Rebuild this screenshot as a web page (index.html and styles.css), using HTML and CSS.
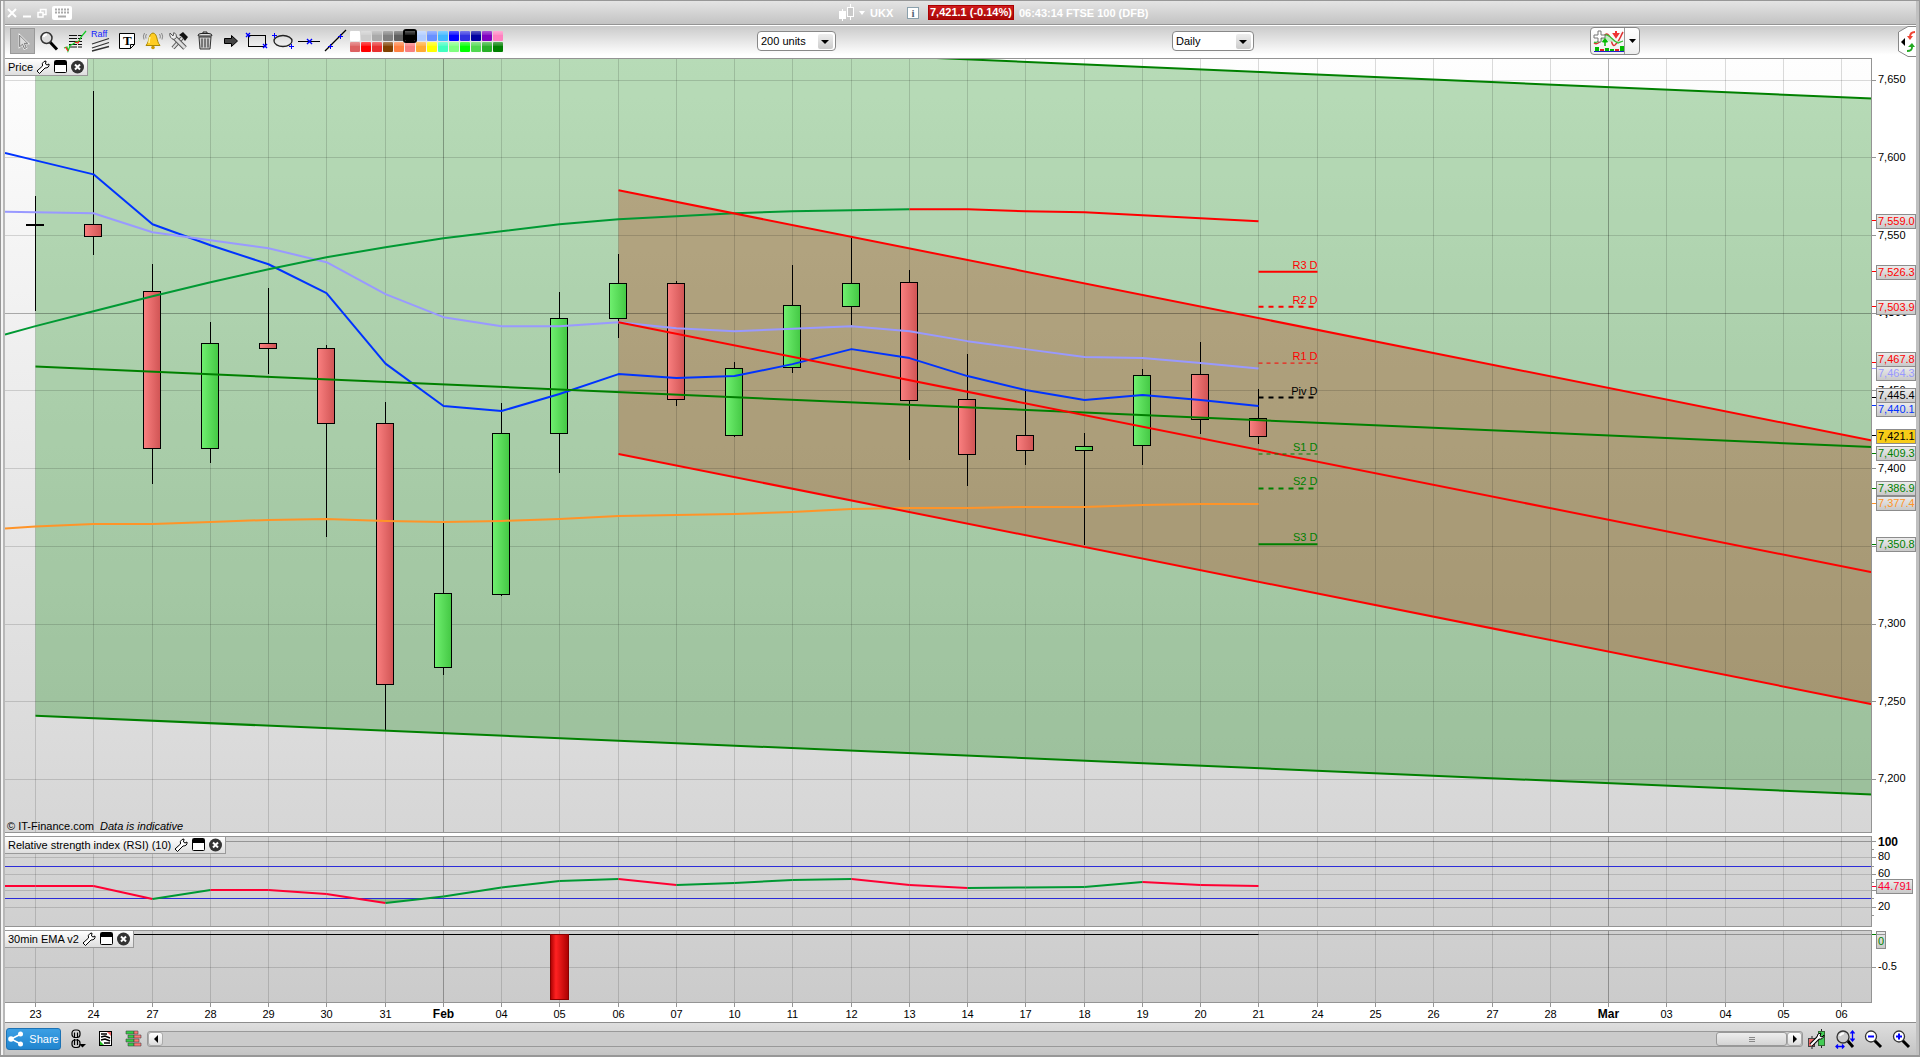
FILE: index.html
```
<!DOCTYPE html>
<html lang="en">
<head>
  <meta charset="UTF-8" />
  <title>UKX - FTSE 100 (DFB)</title>
  <link rel="stylesheet" href="styles.css">
</head>
<body>
  <div class="window">
    <header class="titlebar">
      <div class="win-buttons">
        <button class="win-btn" aria-label="Close"><svg width="10" height="10" viewBox="0 0 10 10"><path d="M1 1L9 9M9 1L1 9" stroke="#fff" stroke-width="2"/></svg></button>
        <button class="win-btn" aria-label="Minimise"><svg width="10" height="10" viewBox="0 0 10 10"><path d="M1 8.5H9" stroke="#fff" stroke-width="2"/></svg></button>
        <button class="win-btn" aria-label="Restore"><svg width="10" height="10" viewBox="0 0 10 10"><path d="M3.5 4V1.5H9V6.5H6.500M1 4.500H6V9H1Z" fill="none" stroke="#fff" stroke-width="1.500"/></svg></button>
        <button class="win-btn" aria-label="Keyboard"><svg width="20" height="14" viewBox="0 0 20 14"><rect width="20" height="14" rx="2" fill="#fff"/><path d="M3 3.500H17M3 6.500H17" stroke="#aaa" stroke-width="2" stroke-dasharray="2 1"/><path d="M6 10.500H14" stroke="#aaa" stroke-width="2"/></svg></button>
      </div>
      <div class="instrument">
        <svg width="16" height="18" viewBox="0 0 16 18"><path d="M3.500 5V17M11.500 0V16" stroke="#fff"/><rect y="7" width="7" height="8" fill="#fff"/><rect x="8.500" y="3.500" width="6" height="9" fill="#c9c9c9" stroke="#fff"/></svg>
        <span class="caret"></span>
        <span class="symbol">UKX</span>
        <button class="info" aria-label="Information">i</button>
        <strong class="quote">7,421.1 (-0.14%)</strong>
        <span>06:43:14 FTSE 100 (DFB)</span>
      </div>
    </header>

    <div class="toolbar">
      <div class="tools">
        <button class="tool active" aria-label="Pointer"><svg width="24" height="24" viewBox="0 0 24 24"><path d="M9 6V18L12 15.500L14 20L16 19L14 14.500H17.500Z" fill="#ccc" stroke="#fff" stroke-width="2"/><path d="M9 6V18L12 15.500L14 20L16 19L14 14.500H17.500Z" fill="#ddd" stroke="#555" stroke-width=".8"/></svg></button>
        <button class="tool" aria-label="Zoom"><svg width="24" height="24" viewBox="0 0 24 24"><path d="M13 13L20 20.500" stroke="#000" stroke-width="3"/><circle cx="9.500" cy="9" r="5.500" fill="#ddd" stroke="#333" stroke-width="1.500"/><path d="M6.500 8A3.500 3.500 0 0 1 10 5.500" stroke="#fff" stroke-width="2" fill="none"/></svg></button>
        <button class="tool" aria-label="Order"><svg width="24" height="24" viewBox="0 0 24 24"><path d="M6 6.500H19M6 9.500H19M6 12.500H19M6 15.500H19M6 18H19" stroke="#111" stroke-dasharray="8 1 4 1"/><path d="M6 17L10 15L13 13L16 12L18 8L23 2" stroke="#1c2" fill="none" stroke-width="1.200"/><path d="M1 19L4 18L5 22L7 17" stroke="#1c2" fill="none" stroke-width="1.200"/><path d="M2.500 18L5 22M12 13L15 14L16 12" stroke="#f22" fill="none" stroke-width="1.300"/></svg></button>
        <button class="tool" aria-label="Raff channel"><svg width="24" height="24" viewBox="0 0 24 24"><text x="2" y="8" class="raff">Raff</text><path d="M3 15L20 9.500M3 19L20 13.500M3 22L20 17.500" stroke="#333" stroke-width="1.300"/></svg></button>
        <button class="tool" aria-label="Text"><svg width="24" height="24" viewBox="0 0 24 24"><path d="M4.500 4.500H19.500V15.500L15.500 19.500H4.500ZM19.500 15.500H15.500V19.500" fill="#fff" stroke="#000"/><text x="8" y="16" class="tee">T</text></svg></button>
        <button class="tool" aria-label="Alert"><svg width="24" height="24" viewBox="0 0 24 24"><path d="M12 4C7 5 9 12 5 16.500H19C15 12 17 5 12 4Z" fill="#fc2" stroke="#a80"/><circle cx="12" cy="18.500" r="1.800" fill="#c90"/><path d="M9 8Q8 11 8 14" stroke="#fff5a0" stroke-width="1.500" fill="none"/><path d="M5.500 5Q4 7 5 9.500M3.500 4Q1.500 7 3 10.500M18.500 5Q20 7 19 9.500M20.500 4Q22.500 7 21 10.500" fill="none" stroke="#888"/></svg></button>
        <button class="tool" aria-label="Settings"><svg width="24" height="24" viewBox="0 0 24 24"><path d="M6 19L15 9" stroke="#555" stroke-width="4"/><path d="M6 19L15 9" stroke="#ddd" stroke-width="2"/><path d="M7 8L18 19" stroke="#555" stroke-width="5"/><path d="M7 8L18 19" stroke="#ddd" stroke-width="3"/><path d="M3 4L6 7L7 3.500A5 5 0 0 1 9.500 8.500L7 10.500A5 5 0 0 1 3 4Z" fill="#eee" stroke="#555"/><path d="M12 6L16 3L21 8L18 12L15 8Z" fill="#111"/></svg></button>
        <button class="tool" aria-label="Delete"><svg width="24" height="24" viewBox="0 0 24 24"><path d="M6 8H18L17 20H7Z" fill="#ccc" stroke="#333"/><path d="M5 7Q5 4.500 8 4.500H16Q19 4.500 19 7Z" fill="#ddd" stroke="#222"/><path d="M10 4.500V3H14V4.500M9 9.500V18.500M12 9.500V18.500M15 9.500V18.500" fill="none" stroke="#222"/></svg></button>
        <button class="tool" aria-label="Arrow"><svg width="24" height="24" viewBox="0 0 24 24"><path d="M5.500 9.500H12.500V6.500L18.500 12L12.500 17.500V14.500H5.500Z" fill="#444" stroke="#000"/></svg></button>
        <button class="tool" aria-label="Rectangle"><svg width="24" height="24" viewBox="0 0 24 24"><rect x="3.500" y="6.500" width="17" height="11" fill="none" stroke="#000"/><path d="M1 4L5 8M5 4L1 8M18 15L22 19M22 15L18 19" stroke="#00f" stroke-width="1.400"/></svg></button>
        <button class="tool" aria-label="Ellipse"><svg width="24" height="24" viewBox="0 0 24 24"><ellipse cx="12" cy="12" rx="9" ry="5.500" fill="none" stroke="#222" stroke-width="1.300"/><path d="M3.500 4V9M1 6.500H6M20.500 15V20M18 17.500H23" stroke="#00f"/></svg></button>
        <button class="tool" aria-label="Horizontal line"><svg width="24" height="24" viewBox="0 0 24 24"><path d="M1 12.500H23" stroke="#000"/><path d="M10 10L15 15M15 10L10 15" stroke="#00f" stroke-width="1.400"/></svg></button>
        <button class="tool" aria-label="Line"><svg width="24" height="24" viewBox="0 0 24 24"><path d="M2 22L23 1" stroke="#000" stroke-width="1.300"/><path d="M7.500 15V20M5 17.500H10M17.500 5V10M15 7.500H20" stroke="#00f"/></svg></button>
        <div class="palette">
          <button class="sw c1" aria-label="White"></button><button class="sw c2" aria-label="Light grey"></button><button class="sw c3" aria-label="Silver"></button><button class="sw c4" aria-label="Grey"></button><button class="sw c5" aria-label="Dark grey"></button><button class="sw c6 picked" aria-label="Black"></button><button class="sw c7" aria-label="Pale blue"></button><button class="sw c8" aria-label="Cornflower"></button><button class="sw c9" aria-label="Sky blue"></button><button class="sw c10" aria-label="Blue"></button><button class="sw c11" aria-label="Royal blue"></button><button class="sw c12" aria-label="Navy"></button><button class="sw c13" aria-label="Purple"></button><button class="sw c14" aria-label="Pink"></button>
          <button class="sw c15" aria-label="Rose"></button><button class="sw c16" aria-label="Red"></button><button class="sw c17" aria-label="Crimson"></button><button class="sw c18" aria-label="Brown"></button><button class="sw c19" aria-label="Orange"></button><button class="sw c20" aria-label="Salmon"></button><button class="sw c21" aria-label="Amber"></button><button class="sw c22" aria-label="Yellow"></button><button class="sw c23" aria-label="Aqua"></button><button class="sw c24" aria-label="Pale green"></button><button class="sw c25" aria-label="Lime"></button><button class="sw c26" aria-label="Mid green"></button><button class="sw c27" aria-label="Forest green"></button><button class="sw c28" aria-label="Green"></button>
        </div>
      </div>
      <div class="cell">
        <div class="drop"><select aria-label="Number of units"><option>200 units</option></select></div>
      </div>
      <div class="cell">
        <div class="drop wide"><select aria-label="Timeframe"><option>Daily</option></select></div>
      </div>
      <div class="cell last">
        <div class="indicators">
          <button class="ind" aria-label="Add indicator"><svg width="32" height="24" viewBox="0 0 32 24"><path d="M2 14C8 18 11 4 15 5C20 6 19 19 23 16C28 12 28 8 31 3" fill="none" stroke="#d33" stroke-width="1.500"/><path d="M2 13C7 16 10 5 15 6C20 8 21 12 26 14L31 12" fill="#c4ecc4" stroke="#3b3" stroke-width="1.300"/><path d="M6 2H9V6H13V9H9V13H6V9H2V6H6Z" fill="#fff" stroke="#777"/><path d="M13 17V13H10.500L13 9.500L15.500 13H13Z" fill="#0b0" stroke="#0b0"/><path d="M24 2V6M22 5L24 8L26 5Z" fill="#e33" stroke="#e33" stroke-width="2"/><path d="M3 18H7V22H3ZM13 19H17V22H13ZM28 17H32V22H28Z" fill="#0b0"/><path d="M8 20H12V22H8ZM23 20H27V22H23Z" fill="#d22"/><path d="M18 20H22V22H18Z" fill="#0b0"/><path d="M2 22.500H32" stroke="#22c"/></svg></button>
          <button class="ind-menu" aria-label="Indicator list"><svg width="7" height="4" viewBox="0 0 7 4"><path d="M0 0H7L3.500 4Z"/></svg></button>
        </div>
        <button class="side-tab" aria-label="Open trading panel"><svg width="18" height="31" viewBox="0 0 18 31"><path d="M18 .5H10L.5 6V25L10 30.500H18" fill="#fff" stroke="#888"/><path d="M7 12V20L3 16Z"/><path d="M17 6C13 6 12 8 12 11" fill="none" stroke="#e43" stroke-width="2"/><path d="M9 10H15L12 14Z" fill="#e43"/><path d="M9 25C14 25 14 23 14 21" fill="none" stroke="#2a2" stroke-width="2"/><path d="M10 21H17L14 17Z" fill="#2a2"/></svg></button>
      </div>
    </div>

    <main class="charts">
      <section class="panel price" id="price">
        <div class="legend"><span>Price</span></div>
        <p class="credit">© IT-Finance.com <em>Data is indicative</em></p>
      </section>
      <section class="panel rsi" id="rsi">
        <div class="legend"><span>Relative strength index (RSI) (10)</span></div>
      </section>
      <section class="panel ema" id="ema">
        <div class="legend"><span>30min EMA v2</span></div>
      </section>
      <div class="dates" id="dates"></div>
    </main>

    <footer class="bottombar">
      <button class="share"><svg width="16" height="16" viewBox="0 0 16 16"><path d="M13 3L3 8L13 13" fill="none" stroke="#fff" stroke-width="1.500"/><circle cx="12.500" cy="3" r="2.500" fill="#fff"/><circle cx="3" cy="8" r="2.800" fill="#fff"/><circle cx="12.500" cy="13" r="2.500" fill="#fff"/></svg>Share</button>
      <button class="foot" aria-label="Link charts"><svg width="18" height="20" viewBox="0 0 18 20"><g fill="none" stroke="#000" stroke-width="1.200"><rect x="4" y="1" width="8" height="7.500" rx="3"/><rect x="4" y="11" width="8" height="7.500" rx="3"/><path d="M6.500 3.500V9M9.500 3.500V9M6.500 10V16M9.500 10V16"/></g><path d="M11 15H18L14.500 18.500Z"/></svg></button>
      <button class="foot" aria-label="Order list"><svg width="18" height="20" viewBox="0 0 18 20"><rect x="3.500" y="2.500" width="12" height="14" fill="#fff" stroke="#000"/><path d="M5 5H11M5 8L9 7L14 9M5 11L9 10L14 12M8 14H14" stroke="#000" stroke-width="1.500" fill="none"/><path d="M11 3H15V7Z" fill="#e66"/><path d="M4 12V16H8Z" fill="#2b2"/></svg></button>
      <button class="foot" aria-label="Order book"><svg width="18" height="20" viewBox="0 0 18 20"><path d="M2 2H10V5H2ZM4 6H10V9H4ZM2 10H10V13H2ZM4 14H10V17H4Z" fill="#3c4" stroke="#444" stroke-width=".6"/><path d="M10 2H14V5H10ZM10 6H17V9H10ZM10 10H15V13H10ZM10 14H17V17H10Z" fill="#f77" stroke="#444" stroke-width=".6"/></svg></button>
      <div class="scroll">
        <button class="arrow" aria-label="Scroll left"><svg width="4" height="8" viewBox="0 0 4 8"><path d="M4 0V8L0 4Z"/></svg></button>
        <div class="track"><div class="thumb"><i></i><i></i><i></i></div></div>
        <button class="arrow" aria-label="Scroll right"><svg width="4" height="8" viewBox="0 0 4 8"><path d="M0 0V8L4 4Z"/></svg></button>
      </div>
      <button class="foot big" aria-label="Chart settings"><svg width="20" height="20" viewBox="0 0 20 20"><path d="M5 7V20M14.500 0V19" stroke="#222"/><rect x="1.500" y="9.500" width="6" height="8" fill="#e66" stroke="#444"/><rect x="11.500" y="2.500" width="6" height="14" fill="#4c5" stroke="#363"/><path d="M4 16L12 8" stroke="#000" stroke-width="4"/><path d="M10 8A4 4 0 0 1 14 4L13 7L15 8L17 6A4 4 0 0 1 12 10" fill="#fff" stroke="#000"/><path d="M4 16L12 8" stroke="#fff" stroke-width="2"/></svg></button>
      <button class="foot big" aria-label="Fit chart"><svg width="20" height="20" viewBox="0 0 20 20"><path d="M12 11L18 18" stroke="#000" stroke-width="3"/><circle cx="8" cy="8" r="6" fill="#ccc" stroke="#333" stroke-width="1.300"/><path d="M5 7Q6 4 9 4.500" stroke="#fff" stroke-width="2" fill="none"/><path d="M17.500 3V11M15.500 4.500L17.500 2L19.500 4.500M15.500 9.500L17.500 12L19.500 9.500M1 17.500H9M3 15.500L1 17.500L3 19.500M7 15.500L9 17.500L7 19.500" fill="none" stroke="#00f" stroke-width="1.300"/></svg></button>
      <button class="foot big" aria-label="Zoom out"><svg width="20" height="20" viewBox="0 0 20 20"><path d="M11 11L18 18" stroke="#000" stroke-width="3"/><circle cx="8" cy="7.500" r="5.500" fill="#fff" stroke="#333" stroke-width="1.300"/><path d="M5 7.500H11" stroke="#00f" stroke-width="2"/></svg></button>
      <button class="foot big" aria-label="Zoom in"><svg width="20" height="20" viewBox="0 0 20 20"><path d="M11 11L18 18" stroke="#000" stroke-width="3"/><circle cx="8" cy="7.500" r="5.500" fill="#fff" stroke="#333" stroke-width="1.300"/><path d="M5 7.500H11M8 4.500V10.500" stroke="#00f" stroke-width="2"/></svg></button>
    </footer>
  </div>
  <script src="chart.js"></script>
</body>
</html>
```
FILE: styles.css
```
* { box-sizing: border-box; }
body { margin: 0; font-family: "Liberation Sans", Arial, sans-serif; font-size: 11px; color: #000; background: #c6c6c6; }
button { margin: 0; padding: 0; border: 0; background: none; font: inherit; cursor: pointer; display: flex; align-items: center; justify-content: center; }
svg { display: block; }

.window { height: 100vh; display: flex; flex-direction: column; border: 1px solid #979797; border-bottom-width: 2px; padding: 0 3px 0 4px; background: linear-gradient(90deg, #f4f4f4 0, #f4f4f4 2px, #b8b8b8 2px, #b8b8b8 4px, #c0c0c0 4px); }

/* title bar */
.titlebar { height: 24px; display: grid; grid-template-columns: 834fr 1077fr; align-items: center; background: linear-gradient(#e4e4e4, #c3c3c3); border-bottom: 1px solid #949494; color: #fff; font-weight: bold; }
.win-buttons { display: flex; gap: 5px; padding-left: 2px; }
.instrument { display: flex; align-items: center; white-space: nowrap; }
.caret { border: 3px solid transparent; border-top: 4px solid #fff; border-bottom: 0; margin: 0 5px 0 4px; }
.symbol { width: 37px; }
.info { width: 12px; height: 12px; margin-right: 9px; background: #fff; border: 1px solid #8aa0ac; color: #567; font-family: "Liberation Serif", serif; font-weight: bold; font-size: 11px; line-height: 10px; }
.quote { height: 15px; line-height: 13px; padding: 0 1px; margin-right: 5px; background: linear-gradient(#cf1c1c, #a80808); border: 1px solid #a00; }

/* toolbar */
.toolbar { height: 33px; display: grid; grid-template-columns: 752fr 415fr 418fr 326fr; background: linear-gradient(#cacaca, #fff 90%); border-top: 1px solid #fff; }
.tools { display: flex; padding: 2px 0 0 5px; }
.tool { width: 26px; height: 26px; flex: none; }
.active { background: #b4b4b4; border: 1px solid #999; width: 25px; margin-right: 1px; }
.raff { font-size: 9px; fill: #12f; }
.tee { font-family: "Liberation Serif", serif; font-weight: bold; font-size: 13px; }
.palette { display: grid; grid-template-columns: repeat(14, 10px); grid-auto-rows: 10px; gap: 1px; margin: 3px 0 0 2px; }
.sw { border-radius: 1px; background-image: linear-gradient(rgba(255,255,255,.35), rgba(255,255,255,.1) 40%, transparent 40%); }
.picked { outline: 2px solid #000; z-index: 1; }
.c1 { background-color: #fff; } .c2 { background-color: #ccc; } .c3 { background-color: #aaa; } .c4 { background-color: #808080; }
.c5 { background-color: #606060; } .c6 { background-color: #000; } .c7 { background-color: #b0ccff; } .c8 { background-color: #6890ff; }
.c9 { background-color: #40b8ff; } .c10 { background-color: #00f; } .c11 { background-color: #3030e0; } .c12 { background-color: #0000a0; }
.c13 { background-color: #8000c0; } .c14 { background-color: #ff80c0; } .c15 { background-color: #dc6060; } .c16 { background-color: #f00; }
.c17 { background-color: #e83030; } .c18 { background-color: #804000; } .c19 { background-color: #ff8040; } .c20 { background-color: #f88080; }
.c21 { background-color: #fa3; } .c22 { background-color: #ff0; } .c23 { background-color: #40ffc0; } .c24 { background-color: #80ff80; }
.c25 { background-color: #0f0; } .c26 { background-color: #50d850; } .c27 { background-color: #28b028; } .c28 { background-color: #008000; }
.cell { padding-top: 5px; }
.drop { position: relative; width: 79px; }
.drop.wide { width: 82px; }
.drop select { display: block; appearance: none; width: 100%; height: 20px; padding: 0 3px; border: 1px solid #888; border-radius: 4px; background: #fff; color: #000; font: inherit; }
.drop::before { content: ""; position: absolute; right: 3px; top: 3px; width: 15px; height: 15px; background: linear-gradient(#eee, #ccc); border-radius: 2px; }
.drop::after { content: ""; position: absolute; right: 7px; top: 9px; border: 4px solid transparent; border-top-color: #000; border-bottom: 0; }
.last { padding-top: 0; display: flex; justify-content: space-between; align-items: flex-start; }
.indicators { display: flex; height: 28px; margin-top: 1px; border: 1px solid #888; border-radius: 4px; background: linear-gradient(#fff, #eee); }
.ind { width: 34px; border-right: 1px solid #999; }
.ind-menu { width: 14px; }

/* chart panels */
.charts { flex: 1; min-height: 0; display: flex; flex-direction: column; gap: 3px; background: #fff; }
.panel { position: relative; min-height: 0; }
.panel > svg { position: absolute; left: 0; top: 0; width: 100%; height: 100%; }
.price { flex: 776; }
.rsi { flex: 91; }
.ema { flex: 73; }
.dates { height: 19px; margin-top: -3px; }
.dates svg { width: 100%; height: 19px; }
.legend { position: absolute; z-index: 1; left: 0; top: 0; height: 18px; display: flex; align-items: center; gap: 3px; padding: 0 3px 1px; background: linear-gradient(#fff, #dedede); border: 1px solid #999; border-left: 0; white-space: nowrap; }
.legend button { width: 14px; height: 14px; }
.credit { position: absolute; z-index: 1; left: 2px; bottom: 0; margin: 0; line-height: 13px; }
.credit em { margin-left: 3px; }

.grid { stroke: #000; stroke-opacity: .14; }
.grid.major { stroke-opacity: .3; }
.frame { fill: none; stroke: #949494; }
.line { fill: none; stroke-width: 2; stroke-linejoin: round; }
.wick { stroke: #000; }
.candle { stroke: #000; }
.lbl { font-size: 11px; }
.lbl.b { font-size: 12px; font-weight: bold; }
.mid { text-anchor: middle; }
.end { text-anchor: end; }
.tagbox { fill: url(#tagFill); stroke: #8c8c8c; }
.tagbox.now { fill: #f8cc18; }

/* bottom bar */
.bottombar { height: 33px; display: flex; align-items: center; padding: 0 1px; background: linear-gradient(#dedede, #c4c4c4); border-top: 1px solid #8c8c8c; }
.share { width: 55px; height: 22px; gap: 5px; margin-right: 2px; color: #fff; background: linear-gradient(#3b9fe4, #2185cf); border: 1px solid #1c72b4; border-radius: 3px; }
.foot { width: 28px; height: 22px; flex: none; }
.scroll { flex: 1; height: 16px; display: flex; border: 1px solid #999; border-radius: 3px; background: #cbcbcb; }
.arrow { width: 15px; background: linear-gradient(#fff, #ddd); border: 1px solid #aaa; border-radius: 3px; }
.track { flex: 1; display: flex; justify-content: flex-end; }
.thumb { width: 71px; display: flex; flex-direction: column; gap: 1px; align-items: center; justify-content: center; border: 1px solid #999; border-radius: 3px; background: linear-gradient(#eee, #d4d4d4); }
.thumb i { width: 6px; height: 1px; background: #888; }
```
FILE: chart.js
```
// Vertical positions are on a page-high scale; each panel gives the part it shows.
const AXIS = 44;      // width of the scale on the right
const PLOT = 1867;    // plot width the x values are given for
const FIRST = 30.5, STEP = 58.26;

const days = ['23','24','27','28','29','30','31','Feb','04','05','06','07','10','11','12','13','14','17','18','19','20','21','24','25','26','27','28','Mar','03','04','05','06'];

// high, body top, body bottom, low, rising
const candles = [
  [196,224,226,311,0],[91,224,237,255,0],[264,291,450,485,0],[322,343,450,464,1],
  [288,343,349,374,0],[345,348,424,538,0],[402,423,686,731,0],[523,594,669,676,1],
  [403,433,596,597,1],[292,318,434,474,1],[254,283,319,338,1],[281,283,400,406,0],
  [362,368,436,437,1],[265,305,368,373,1],[238,283,307,325,1],[270,282,401,461,0],
  [354,399,456,487,0],[389,435,452,466,0],[433,446,452,546,1],[369,375,447,466,1],
  [342,374,420,434,0],[389,418,437,444,0]
];

// moving averages, the first value is at the left edge
const fast = [153,160.5,174.5,224.5,245.5,264.5,293.5,364,406.5,411.5,394.5,374.5,378.5,376.5,364.5,349.5,358.5,376.5,390.5,400.5,395.5,400.5,406.5];
const slow = [212,212.5,213.5,232.5,240.5,248.5,262.5,294.5,317.5,326.5,326.5,322.5,328.5,331.5,329,326.5,331.5,341.5,349.5,357.5,358.5,363.5,369];
const long = [335,326.5,311.5,296.5,282.5,269.5,257.5,247.5,238.5,231.5,224.5,219.5,216.5,213.5,211.5,210.5,209.5,209.5,211.5,212.5,215.5,218.5,221.5];
const base = [529,527,524.5,524.5,522.5,520.5,519.5,521.5,522.5,521.5,519.5,516.5,515.5,514.5,512.5,509.5,508.5,508.5,507.5,507.5,505.5,504.5,504.5];
const rsi = [886.5,886.5,886.5,899.5,890.5,890.5,894.5,903.5,897,888,881.5,879.5,885.5,883.5,880.5,879.5,885.5,888.5,888,887.5,882.5,885.5,886.5];
const rsiUp = [0,0,0,1,0,0,0,1,1,1,1,0,1,1,1,0,0,1,1,1,0,0];

// label, level, colour, width, dash
const pivots = [
  ['R3 D',272,'#f00',2,''],['R2 D',307,'#f00',2,'5 5'],['R1 D',363.5,'#f00',1,'4 4'],
  ['Piv D',398,'#000',2,'5 5'],['S1 D',454.5,'#008000',1,'4 4'],['S2 D',489,'#008000',2,'5 5'],
  ['S3 D',545,'#008000',2,'']
];

// value, tick, top of the box, colour
const tags = [
  ['7,559.0',221,214,'#f00'],['7,526.3',272,265,'#f00'],['7,503.9',307,300,'#f00'],
  ['7,467.8',363,352,'#f00'],['7,464.3',369,366,'#99f'],['7,445.4',398,388,'#000'],
  ['7,440.1',406,402,'#03f'],['7,421.1',436,429,'#000'],['7,409.3',454,447,'#008000'],
  ['7,386.9',489,482,'#008000'],['7,377.4',504,497,'#ff9428'],['7,350.8',545,538,'#008000']
];

const legendIcons = `
  <button aria-label="Settings"><svg width="14" height="14" viewBox="0 0 14 14"><path d="M1 11L6.500 6Q5.500 3 8 1.500L10 1L9.500 4L11 5L13 4Q13.500 8 9 8L3.500 13.500Z" fill="#fff" stroke="#000"/></svg></button>
  <button aria-label="Window"><svg width="14" height="14" viewBox="0 0 14 14"><rect x="1.500" y=".5" width="12" height="12" rx="1" fill="#fff" stroke="#000"/><path d="M2 1H13V5H2Z"/></svg></button>
  <button aria-label="Close"><svg width="14" height="14" viewBox="0 0 14 14"><circle cx="7.500" cy="7" r="6.500" fill="#333"/><path d="M5 4.500L10 9.500M10 4.500L5 9.500" stroke="#fff" stroke-width="2"/></svg></button>`;
document.querySelectorAll('.legend').forEach(l => l.insertAdjacentHTML('beforeend', legendIcons));

const snap = v => Math.floor(v) + 0.5;
const seg = (cls, x1, y1, x2, y2, extra) => `<line class="${cls}" x1="${x1}" y1="${y1}" x2="${x2}" y2="${y2}" ${extra || ''}/>`;
const label = (cls, x, y, s, fill) => `<text class="lbl ${cls}" x="${x}" y="${y}" fill="${fill || '#000'}">${s}</text>`;

function scales(el, top, height) {
  const w = el.clientWidth - AXIS, h = el.clientHeight;
  return {
    w, h,
    x: i => snap((FIRST + STEP * i) * w / PLOT),
    y: v => (v - top) * h / height
  };
}

function backdrop(s, id, from, to) {
  return `<defs><linearGradient id="${id}" x2="0" y2="1"><stop stop-color="${from}"/><stop offset="1" stop-color="${to}"/></linearGradient>
    <clipPath id="${id}Clip"><rect width="${s.w}" height="${s.h}"/></clipPath></defs>
    <rect width="${s.w}" height="${s.h}" fill="url(#${id})"/>`;
}

function verticals(s) {
  return days.map((d, i) => seg('grid' + (/[a-z]/.test(d) ? ' major' : ''), s.x(i), 0, s.x(i), s.h)).join('');
}

function tag(s, value, tick, top, colour, width) {
  const y = Math.round(s.y(top));
  return seg('', s.w, snap(s.y(tick)), s.w + 5, snap(s.y(tick)), `stroke="${colour}"`) +
    `<rect class="tagbox${value === '7,421.1' ? ' now' : ''}" x="${s.w + 4.5}" y="${y + 0.5}" width="${width || 39}" height="14"/>` +
    label('', s.w + 6, y + 11, value, colour);
}

function put(el, body) {
  const old = el.querySelector(':scope > svg');
  if (old) old.remove();
  el.insertAdjacentHTML('afterbegin', `<svg>${body}</svg>`);
}

function average(s, data, colour, from, to) {
  const pts = [];
  for (let i = from; i <= to; i++) pts.push((i ? s.x(i - 1) : 0) + ',' + s.y(data[i]));
  return `<polyline class="line" stroke="${colour}" points="${pts.join(' ')}"/>`;
}

function drawPrice() {
  const el = document.getElementById('price');
  const s = scales(el, 58, 776);
  const x0 = s.x(0), xr = s.x(10), y = s.y;
  let out = backdrop(s, 'priceBg', '#fefefe', '#d6d6d6');
  out += `<defs>
    <linearGradient id="up"><stop stop-color="#70f070"/><stop offset="1" stop-color="#44c844"/></linearGradient>
    <linearGradient id="down"><stop stop-color="#fa8080"/><stop offset="1" stop-color="#d05454"/></linearGradient>
    <linearGradient id="tagFill" x2="0" y2="1"><stop stop-color="#ececec"/><stop offset="1" stop-color="#c8c8c8"/></linearGradient></defs>
    <g clip-path="url(#priceBgClip)">
    <polygon points="${x0},${y(19)} ${s.w},${y(98.5)} ${s.w},${y(795.5)} ${x0},${y(716.5)}" fill="#008000" fill-opacity=".277"/>
    <polygon points="${xr},${y(190.5)} ${s.w},${y(441)} ${s.w},${y(705)} ${xr},${y(454.5)}" fill="#b42400" fill-opacity=".28"/>`;
  out += verticals(s);
  for (let p = 7650, v = 80.3; p >= 7200; p -= 50, v += 77.78) {
    out += seg('grid' + (p === 7500 ? ' major' : ''), 0, snap(y(v)), s.w, snap(y(v)));
  }
  candles.forEach((c, i) => {
    const x = s.x(i), t = Math.round(y(c[1])), b = Math.round(y(c[2]));
    out += seg('wick', x, Math.round(y(c[0])), x, Math.round(y(c[3])));
    out += `<rect class="candle" x="${x - 9}" y="${t + 0.5}" width="17" height="${b - t - 1}" fill="url(#${c[4] ? 'up' : 'down'})"/>`;
  });
  out += average(s, fast, '#03f', 0, 22) + average(s, slow, '#99f', 0, 22) + average(s, base, '#ff9428', 0, 22);
  out += average(s, long, '#009933', 0, 16) + average(s, long, '#f00', 16, 22);
  [[19, 98.5], [367, 447.5], [716.5, 795.5]].forEach(c => { out += seg('line', x0, y(c[0]), s.w, y(c[1]), 'stroke="#008000"'); });
  [[190.5, 441], [322.5, 573], [454.5, 705]].forEach(c => { out += seg('line', xr, y(c[0]), s.w, y(c[1]), 'stroke="#f00"'); });
  pivots.forEach(p => {
    out += seg('', s.x(21), y(p[1]), s.x(22), y(p[1]), `stroke="${p[2]}" stroke-width="${p[3]}" stroke-dasharray="${p[4]}"`);
    out += label('end', s.x(22), Math.round(y(p[1])) - 3, p[0], p[2]);
  });
  out += `</g><rect class="frame" x="-1" y=".5" width="${s.w + 0.5}" height="${s.h - 1}"/>`;
  for (let p = 7650, v = 80.3; p >= 7200; p -= 50, v += 77.78) {
    out += seg('frame', s.w, snap(y(v)), s.w + 4, snap(y(v)));
    // the S3 tag sits right on the 7,350 level
    if (p !== 7350) out += label(p === 7500 ? 'b' : '', s.w + 6, Math.round(y(v)) + 3, p.toLocaleString('en-US'));
  }
  tags.forEach(t => { out += tag(s, ...t); });
  put(el, out);
}

function drawRsi() {
  const el = document.getElementById('rsi');
  const s = scales(el, 836.5, 91);
  const y = s.y;
  let out = backdrop(s, 'rsiBg', '#d6d6d6', '#d0d0d0') + verticals(s);
  [[841.5, 1], [857.5], [874.5], [890.5], [907.5]].forEach(g => {
    out += seg('grid' + (g[1] ? ' major' : ''), 0, snap(y(g[0])), s.w, snap(y(g[0])));
    out += seg('frame', s.w, snap(y(g[0])), s.w + 4, snap(y(g[0])));
  });
  [849.5, 866.5, 882.5, 898.5, 915.5].forEach(v => { out += seg('frame', s.w, snap(y(v)), s.w + 2, snap(y(v))); });
  out += `<polygon points="${s.x(5) + 28},${y(898.5)} ${s.x(6)},${y(903.5)} ${s.x(7) - 14},${y(898.5)}" fill="#008000" fill-opacity=".3"/>`;
  [866.5, 898.5].forEach(v => { out += seg('', 0, snap(y(v)), s.w, snap(y(v)), 'stroke="#2c2cd8"'); });
  rsiUp.forEach((up, i) => { out += average(s, rsi, up ? '#009933' : '#ff0033', i, i + 1); });
  out += `<rect class="frame" x="-1" y=".5" width="${s.w + 0.5}" height="${s.h - 1}"/>`;
  out += label('b', s.w + 6, Math.round(y(846.5)), '100');
  [['80', 860.5], ['60', 877.5], ['20', 910.5]].forEach(l => { out += label('', s.w + 6, Math.round(y(l[1])), l[0]); });
  out += tag(s, '44.791', 886.5, 879.5, '#ff0033', 36);
  put(el, out);
}

function drawEma() {
  const el = document.getElementById('ema');
  const s = scales(el, 930, 73);
  const y = s.y, zero = snap(y(934));
  let out = backdrop(s, 'emaBg', '#d0d0d0', '#cbcbcb') + verticals(s);
  out += `<defs><linearGradient id="bar"><stop stop-color="#a00"/><stop offset=".3" stop-color="#f22"/><stop offset="1" stop-color="#a00"/></linearGradient></defs>`;
  out += seg('grid major', 0, zero, s.w, zero) + seg('grid', 0, snap(y(967)), s.w, snap(y(967)));
  out += seg('wick', 0, zero, s.x(21), zero);
  out += `<rect x="${s.x(9) - 9}" y="${zero}" width="18" height="${y(1000) - y(935)}" fill="url(#bar)" stroke="#800"/>`;
  out += `<rect class="frame" x="-1" y=".5" width="${s.w + 0.5}" height="${s.h - 1}"/>`;
  out += seg('frame', s.w, snap(y(967)), s.w + 4, snap(y(967))) + label('', s.w + 6, Math.round(y(970)), '-0.5');
  out += seg('', s.w, zero, s.w + 4, zero, 'stroke="#008000"');
  out += `<rect class="tagbox" x="${s.w + 4.5}" y="1.5" width="9" height="17"/>` + label('', s.w + 6, Math.round(y(945)), '0', '#008000');
  out += seg('frame', s.w + 4, zero, s.w + 13, zero);
  put(el, out);
}

function drawDates() {
  const el = document.getElementById('dates');
  const s = scales(el, 1003, 20);
  put(el, days.map((d, i) =>
    seg('frame', s.x(i), 0, s.x(i), 4) + label(/[a-z]/.test(d) ? 'mid b' : 'mid', s.x(i), 15, d)).join(''));
}

function draw() {
  drawPrice();
  drawRsi();
  drawEma();
  drawDates();
}

draw();
window.addEventListener('resize', draw);
```
